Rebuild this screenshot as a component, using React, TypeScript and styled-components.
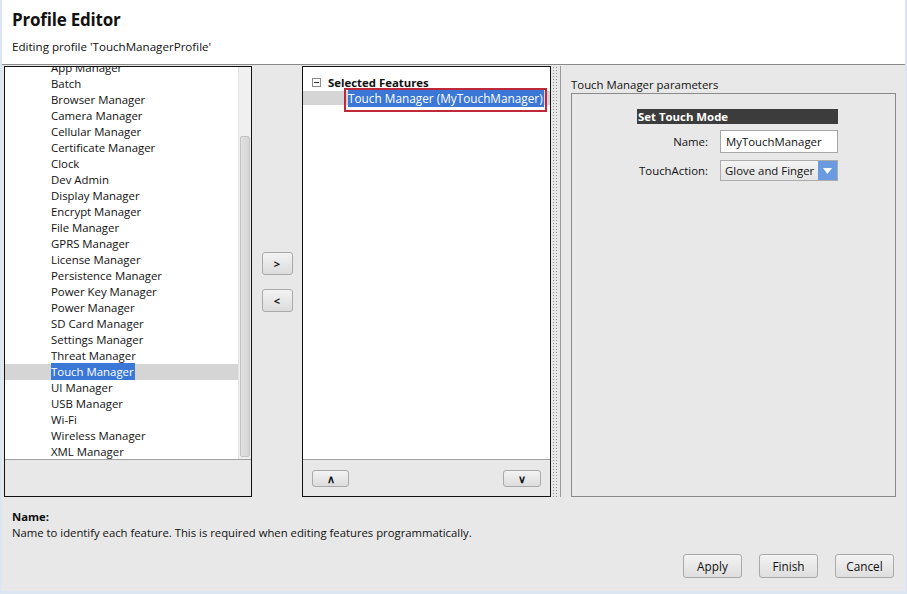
import React from "react";
import styled, { createGlobalStyle } from "styled-components";

const FONT = `"Open Sans", "Noto Sans", "Liberation Sans", sans-serif`;

const GlobalStyle = createGlobalStyle`
  html, body { margin: 0; padding: 0; background: #e8e8e8; }
  body { font-family: ${FONT}; font-size: 11.4px; color: #111; }
  * { box-sizing: border-box; }
`;

const Window = styled.div`
  width: 907px;
  height: 594px;
  background: #e8e8e8;
  border-left: 2px solid #dce6f3;
  border-right: 2px solid #dce6f3;
  border-bottom: 3px solid #dce6f3;
  display: flex;
  flex-direction: column;
  overflow: hidden;
`;

const Header = styled.div`
  height: 65px;
  background: #fff;
  border-bottom: 1px solid #8a8a8a;
  padding: 9px 0 0 10px;
  display: flex;
  flex-direction: column;
`;

const Title = styled.div`
  font-size: 17px;
  font-weight: 700;
  line-height: 22px;
  color: #111;
  letter-spacing: -0.2px;
`;

const Subtitle = styled.div`
  margin-top: 8px;
  font-size: 11.6px;
  line-height: 16px;
`;

const Main = styled.div`
  display: flex;
  padding: 1px 0 0 2px;
  height: 432px;
`;

const Panel = styled.div<{ $w: number }>`
  width: ${(p) => p.$w}px;
  height: 431px;
  border: 1px solid #111;
  display: flex;
  flex-direction: column;
`;

const WhiteArea = styled.div`
  height: 393px;
  background: #fff;
  border-bottom: 1px solid #a0a0a0;
  display: flex;
  overflow: hidden;
  position: relative;
`;

const Items = styled.div`
  flex: 1;
  margin-top: -7px;
`;

const Item = styled.div<{ $sel?: boolean }>`
  height: 16px;
  line-height: 16px;
  padding-left: 46px;
  font-size: 11.4px;
  white-space: nowrap;
  background: ${(p) => (p.$sel ? "#d5d5d5" : "transparent")};
`;

const Highlight = styled.span`
  background: #3a77d6;
  color: #fff;
  padding: 1px 1px 1px 0;
`;

const ScrollTrack = styled.div`
  width: 13px;
  background: #f0f0f0;
  border-left: 1px solid #e4e4e4;
  padding: 69px 1px 2px 1px;
  display: flex;
  flex-direction: column;
`;

const ScrollThumb = styled.div`
  flex: 1;
  border: 1px solid #c4c4c4;
  border-radius: 2px;
  background: linear-gradient(to right, #e2e2e2, #d6d6d6);
`;

const MoveColumn = styled.div`
  width: 50px;
  display: flex;
  flex-direction: column;
  align-items: center;
  padding-top: 186px;
  gap: 14px;
`;

const SmallButton = styled.button<{ $w: number; $h: number }>`
  width: ${(p) => p.$w}px;
  height: ${(p) => p.$h}px;
  padding: 0;
  border: 1px solid #a9a9a9;
  border-radius: 3px;
  background: linear-gradient(#f3f3f3, #dcdcdc);
  font-family: ${FONT};
  font-size: 11px;
  font-weight: 700;
  color: #111;
  display: flex;
  align-items: center;
  justify-content: center;
`;

const TreeHead = styled.div`
  display: flex;
  align-items: center;
  height: 14px;
  margin-top: 8px;
  padding-left: 9px;
  gap: 7px;
  font-weight: 700;
  font-size: 11.4px;
`;

const TreeToggle = styled.span`
  width: 9px;
  height: 9px;
  border: 1px solid #8c8c8c;
  position: relative;
  &::after {
    content: "";
    position: absolute;
    left: 1px;
    right: 1px;
    top: 3px;
    height: 1px;
    background: #333;
  }
`;

const TreeRow = styled.div`
  margin-top: 2px;
  height: 14px;
  line-height: 14px;
  background: #d5d5d5;
  padding-left: 45px;
  font-size: 11.8px;
  white-space: nowrap;
`;

const TreeCol = styled.div`
  flex: 1;
  display: flex;
  flex-direction: column;
`;

const Annotation = styled.div`
  position: absolute;
  left: 41px;
  top: 21px;
  width: 203px;
  height: 24px;
  border: 2px solid #c0283a;
  pointer-events: none;
`;

const PanelFoot = styled.div`
  flex: 1;
  display: flex;
  justify-content: space-between;
  align-items: flex-start;
  padding: 10px 9px 0 9px;
`;

const Splitter = styled.div`
  width: 10px;
  height: 431px;
  display: flex;
  padding-left: 1px;
`;

const Dots = styled.div`
  width: 6px;
  background-image: radial-gradient(circle, #8e8e8e 0.7px, transparent 0.9px);
  background-size: 3px 3px;
`;

const SplitLine = styled.div`
  margin-left: 2px;
  width: 1px;
  background: #9a9a9a;
`;

const RightPanel = styled.div`
  flex: 1;
  display: flex;
  flex-direction: column;
  padding-left: 10px;
`;

const PanelLabel = styled.div`
  height: 27px;
  padding-top: 11px;
  line-height: 16px;
  font-size: 11.4px;
`;

const GroupBox = styled.div`
  width: 325px;
  height: 404px;
  border: 1px solid #8a8a8a;
  padding: 15px 0 0 65px;
`;

const Form = styled.div`
  display: grid;
  grid-template-columns: 71px 118px;
  column-gap: 12px;
  row-gap: 7px;
  align-items: center;
`;

const FormHeader = styled.div`
  grid-column: 1 / span 2;
  height: 15px;
  line-height: 15px;
  background: #3c3c3c;
  color: #fff;
  font-weight: 700;
  font-size: 11.4px;
  padding-left: 1px;
  margin-bottom: -1px;
`;

const Label = styled.div`
  text-align: right;
  font-size: 11.4px;
`;

const TextInput = styled.div`
  height: 23px;
  border: 1px solid #a5a5a5;
  background: #fff;
  padding-left: 5px;
  line-height: 21px;
  font-size: 11.4px;
`;

const Select = styled.div`
  height: 21px;
  border: 1px solid #acacac;
  background: linear-gradient(#f4f4f4, #e4e4e4);
  display: flex;
  font-size: 11.4px;
`;

const SelectText = styled.div`
  flex: 1;
  padding-left: 4px;
  line-height: 19px;
  white-space: nowrap;
`;

const SelectArrow = styled.div`
  width: 19px;
  background: #6a9be0;
  display: flex;
  align-items: center;
  justify-content: center;
`;

const Help = styled.div`
  padding: 12px 0 0 10px;
  height: 57px;
  font-size: 11.3px;
  line-height: 16px;
`;

const HelpTitle = styled.div`
  font-weight: 700;
`;

const Buttons = styled.div`
  display: flex;
  justify-content: flex-end;
  gap: 17px;
  padding-right: 11px;
`;

const DialogButton = styled.button`
  width: 59px;
  height: 24px;
  padding: 0;
  border: 1px solid #a9a9a9;
  border-radius: 3px;
  background: linear-gradient(#f3f3f3, #dedede);
  font-family: ${FONT};
  font-size: 11.8px;
  color: #111;
`;

const features = [
  "App Manager",
  "Batch",
  "Browser Manager",
  "Camera Manager",
  "Cellular Manager",
  "Certificate Manager",
  "Clock",
  "Dev Admin",
  "Display Manager",
  "Encrypt Manager",
  "File Manager",
  "GPRS Manager",
  "License Manager",
  "Persistence Manager",
  "Power Key Manager",
  "Power Manager",
  "SD Card Manager",
  "Settings Manager",
  "Threat Manager",
  "Touch Manager",
  "UI Manager",
  "USB Manager",
  "Wi-Fi",
  "Wireless Manager",
  "XML Manager",
];

export default function App() {
  return (
    <>
      <GlobalStyle />
      <Window>
        <Header>
          <Title>Profile Editor</Title>
          <Subtitle>Editing profile 'TouchManagerProfile'</Subtitle>
        </Header>
        <Main>
          <Panel $w={248}>
            <WhiteArea>
              <Items>
                {features.map((f) => (
                  <Item key={f} $sel={f === "Touch Manager"}>
                    {f === "Touch Manager" ? <Highlight>{f}</Highlight> : f}
                  </Item>
                ))}
              </Items>
              <ScrollTrack>
                <ScrollThumb />
              </ScrollTrack>
            </WhiteArea>
          </Panel>
          <MoveColumn>
            <SmallButton $w={31} $h={23}>&gt;</SmallButton>
            <SmallButton $w={31} $h={23}>&lt;</SmallButton>
          </MoveColumn>
          <Panel $w={249}>
            <WhiteArea>
              <TreeCol>
                <TreeHead>
                  <TreeToggle />
                  Selected Features
                </TreeHead>
                <TreeRow>
                  <Highlight>Touch Manager (MyTouchManager)</Highlight>
                </TreeRow>
              </TreeCol>
              <Annotation />
            </WhiteArea>
            <PanelFoot>
              <SmallButton $w={37} $h={17}>∧</SmallButton>
              <SmallButton $w={38} $h={17}>∨</SmallButton>
            </PanelFoot>
          </Panel>
          <Splitter>
            <Dots />
            <SplitLine />
          </Splitter>
          <RightPanel>
            <PanelLabel>Touch Manager parameters</PanelLabel>
            <GroupBox>
              <Form>
                <FormHeader>Set Touch Mode</FormHeader>
                <Label>Name:</Label>
                <TextInput>MyTouchManager</TextInput>
                <Label>TouchAction:</Label>
                <Select>
                  <SelectText>Glove and Finger</SelectText>
                  <SelectArrow>
                    <svg width="9" height="6" viewBox="0 0 9 6">
                      <path d="M0 0 H9 L4.5 6 Z" fill="#fff" />
                    </svg>
                  </SelectArrow>
                </Select>
              </Form>
            </GroupBox>
          </RightPanel>
        </Main>
        <Help>
          <HelpTitle>Name:</HelpTitle>
          <div>Name to identify each feature. This is required when editing features programmatically.</div>
        </Help>
        <Buttons>
          <DialogButton>Apply</DialogButton>
          <DialogButton>Finish</DialogButton>
          <DialogButton>Cancel</DialogButton>
        </Buttons>
      </Window>
    </>
  );
}
